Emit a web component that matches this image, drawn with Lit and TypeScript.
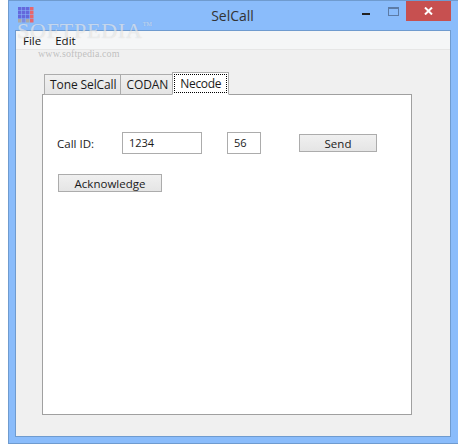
import { LitElement, html, css, svg } from "lit";
import { customElement } from "lit/decorators.js";

function svgRect(x: number, y: number, fill: string) {
  return svg`<rect x=${x} y=${y} width="3.5" height="3.5" fill=${fill} />`;
}

@customElement("app-root")
export class AppRoot extends LitElement {
  static styles = css`
    :host { display: block; width: 458px; height: 444px; background: #fff; overflow: hidden; font-family: "Open Sans", "Noto Sans", "DejaVu Sans", sans-serif; color: #1a1a1a; }
    .window { position: relative; box-sizing: border-box; width: 450px; height: 444px; margin-left: 8px; background: #8abcfb; border: 1px solid #6f9bcf; border-right: none; display: flex; flex-direction: column; }
    .titlebar { height: 29px; display: flex; flex: none; position: relative; }
    .icon { position: absolute; left: 9px; top: 6px; width: 16px; height: 16px; }
    .title { flex: 1; text-align: center; font-size: 14px; line-height: 30px; color: #333; padding-right: 2px; }
    .controls { position: absolute; right: 0; top: 0; display: flex; align-items: flex-start; }
    .min { width: 8px; height: 2px; background: #222; margin: 12px 18px 0 0; }
    .max { box-sizing: border-box; width: 11px; height: 9px; border: 1px solid #5c7ba6; border-top-width: 2px; margin: 6px 7px 0 0; }
    .close { width: 45px; height: 20px; margin: 0 7px 0 0; background: #c75050; display: flex; align-items: center; justify-content: center; }
    .client { margin: 0 7px 6px 6px; flex: 1; background: #f0f0f0; border: 1px solid #6f9bcf; display: flex; flex-direction: column; min-height: 0; }
    .menubar { flex: none; height: 18px; background: #f5f6f7; border-bottom: 1px solid #e6e6e6; display: flex; gap: 14px; padding-left: 7px; font-size: 11.5px; line-height: 20px; color: #111; }
    .content { flex: 1; padding: 24px 38px 21px 26px; display: flex; flex-direction: column; min-height: 0; }
    .tabs { display: flex; padding-left: 2px; height: 21px; flex: none; align-items: flex-end; position: relative; z-index: 1; margin-bottom: -1px; }
    .tab { box-sizing: border-box; height: 21px; border: 1px solid #acacac; margin-right: -1px; background: linear-gradient(#f0f0f0, #e5e5e5); font-size: 12px; line-height: 19px; padding: 0 4px 0 5px; letter-spacing: -0.1px; }
    .tab.active { height: 23px; background: #fff; border-bottom-color: #fff; position: relative; padding: 1px; }
    .tab.active span { display: block; box-sizing: border-box; padding: 0 5px; border: 1px dotted #000; height: 19px; line-height: 17px; letter-spacing: -0.3px; }
    .panel { flex: 1; background: #fff; border: 1px solid #a0a0a0; padding: 37px 33px 0 14px; display: flex; flex-direction: column; gap: 18px; }
    .row { display: flex; align-items: center; height: 22px; font-size: 11px; }
    .label { width: 65px; font-size: 11.5px; }
    .input { box-sizing: border-box; height: 22px; border: 1px solid #acacac; padding-left: 6px; line-height: 20px; background: #fff; }
    .id { width: 80px; margin-right: 25px; }
    .sub { width: 34px; margin-right: 38px; }
    .btn { box-sizing: border-box; height: 18px; border: 1px solid #acacac; background: linear-gradient(#f0f0f0, #e5e5e5); text-align: center; font-size: 11.5px; line-height: 17px; }
    .send { width: 78px; }
    .ack { width: 104px; margin-left: 1px; }
    .wm { position: absolute; left: 8px; top: 17px; font-family: "Liberation Serif", serif; font-size: 22px; letter-spacing: 0.8px; color: rgba(255,255,255,.55); pointer-events: none; text-shadow: 0 0 1px rgba(120,120,120,.3); }
    .wm sup { font-size: 6px; letter-spacing: 0; vertical-align: 12px; line-height: 0; }
    .wm2 { position: absolute; left: 29px; top: 47px; font-family: "Liberation Serif", serif; font-size: 10px; letter-spacing: .1px; color: rgba(170,170,170,.7); pointer-events: none; }
  `;

  render() {
    return html`
      <div class="window">
        <div class="titlebar">
          <svg class="icon" viewBox="0 0 16 16">
            ${[0, 4, 8, 12].map((y) => [0, 4, 8, 12].map((x) => {
              const fill = y === 12 ? (x === 0 ? "#a8a8a8" : x === 4 ? "#7f8fe0" : x === 8 ? "#a8a8a8" : "#e8666c") : x === 12 ? "#e8666c" : "#6468dc";
              return svgRect(x, y, fill);
            }))}
          </svg>
          <div class="title">SelCall</div>
          <div class="controls">
            <div class="min"></div>
            <div class="max"></div>
            <div class="close">
              <svg width="9" height="8" viewBox="0 0 9 8"><path d="M1 0.5 L8 7.5 M8 0.5 L1 7.5" stroke="#fff" stroke-width="2" fill="none"/></svg>
            </div>
          </div>
        </div>
        <div class="client">
          <div class="menubar"><span>File</span><span>Edit</span></div>
          <div class="content">
            <div class="tabs">
              <div class="tab">Tone SelCall</div>
              <div class="tab">CODAN</div>
              <div class="tab active"><span>Necode</span></div>
            </div>
            <div class="panel">
              <div class="row">
                <div class="label">Call ID:</div>
                <div class="input id">1234</div>
                <div class="input sub">56</div>
                <div class="btn send">Send</div>
              </div>
              <div class="row"><div class="btn ack">Acknowledge</div></div>
            </div>
          </div>
        </div>
        <div class="wm">SOFTPEDIA<sup>TM</sup></div>
        <div class="wm2">www.softpedia.com</div>
      </div>
    `;
  }
}
